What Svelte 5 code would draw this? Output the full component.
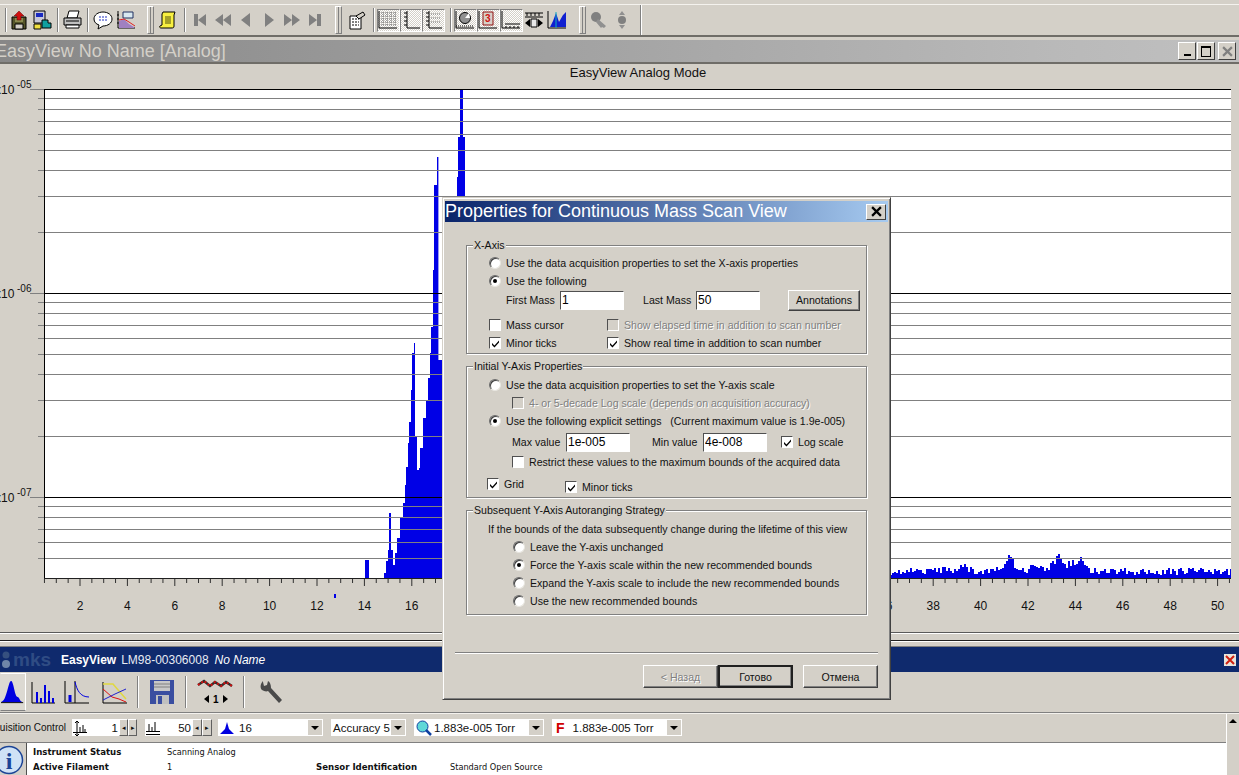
<script lang="ts">
  // chart geometry, same numbers as the page so the svg viewBox lines up with it
  const massX = (m: number) => 32.6 + 23.7 * m;
  const decades = [89, 293, 497];
  const minorOffsets = [9, 20, 32, 45, 61, 81, 107, 143];
  const gridLines = decades.flatMap((d) => minorOffsets.map((o) => d + o)).filter((y) => y < 578);

  const ticks: { x: number; major: boolean }[] = [];
  for (let m = 0.5; m <= 50.5; m += 0.5) {
    ticks.push({ x: massX(m), major: m % 2 === 0 });
  }
  // 18 to 34 sit behind the dialog
  const labels: number[] = [];
  for (let m = 2; m <= 50; m += 2) {
    if (m < 18 || m > 34) labels.push(m);
  }

  // left part of the spectrum, read off the picture: [x, top]
  const peaks: [number, number][] = [
    [365, 560], [369, 578], [384, 573], [386, 561], [388, 550], [389, 513], [391, 550], [393, 565],
    [395, 553], [397, 538], [400, 517], [403, 503], [405, 485], [406, 467], [408, 443], [409, 422],
    [411, 390], [412, 353], [414, 343], [415, 437], [417, 470], [419, 468], [420, 448], [423, 418],
    [426, 400], [428, 378], [430, 353], [431, 327], [433, 270], [434, 185], [437, 157], [438.4, 360],
    [442, 578], [457, 177], [458, 137], [460, 90], [463, 137], [465, 578]
  ];

  function stepPath(points: [number, number][], end: number) {
    let d = `M${points[0][0]} 578`;
    points.forEach(([x, y], i) => {
      const next = i + 1 < points.length ? points[i + 1][0] : end;
      d += `L${x} ${y}L${next} ${y}`;
    });
    return d + `L${end} 578Z`;
  }

  // noise tail on the right, with the few bumps the scan shows
  const bumps = [
    [1010, 3, 13], [1004, 7, 4], [1057, 2, 14], [1053, 7, 6], [1081, 3, 8], [1073, 8, 8],
    [962, 6, 5], [1033, 6, 4], [942, 8, 2]
  ];
  const tail: [number, number][] = [];
  let seed = 7;
  for (let x = 890; x < 1231; x += 2) {
    seed = (seed * 137 + 59) % 1009;
    let h = 3 + (seed / 1009) * 7;
    for (const [c, w, a] of bumps) h += a * Math.exp(-((x - c) * (x - c)) / (2 * w * w));
    tail.push([x, Math.round(578 - h)]);
  }

  const spectrum = stepPath(peaks, 465);
  const noise = stepPath(tail, 1231);

  const navIcons = [
    'M4 4h4v12H4zM8 10l8-6v12z',
    'M2 10l8-6v12zM10 10l8-6v12z',
    'M5 10l9-7v14z',
    'M6 3l9 7-9 7z',
    'M2 4l8 6-8 6zM10 4l8 6-8 6z',
    'M4 4l8 6-8 6zM12 4h4v12h-4z'
  ];
</script>

{#snippet radio(on: boolean, label: string)}
  <div class="row">
    <span class="radio">{#if on}<i></i>{/if}</span>
    <span>{label}</span>
  </div>
{/snippet}

{#snippet check(on: boolean, label: string, off: boolean = false)}
  <div class="row" class:off>
    <span class="box">
      {#if on}<svg viewBox="0 0 9 9" width="9" height="9"><path d="M1 4l2.5 2.5L8 1.5v2L3.5 8.5 1 6z" fill="#000" /></svg>{/if}
    </span>
    <span>{label}</span>
  </div>
{/snippet}

<div class="page">
  <div class="toolbar">
    <span class="sep s1"></span>
    <span class="tb">
      <svg viewBox="0 0 20 20"><path d="M3 7h14v12H3z" fill="#55552a" stroke="#000" /><path d="M6 14h8v5H6z" fill="#d4d0c8" stroke="#000" /><path d="M6 8h8v4H6z" fill="#8a8a50" /><path d="M10 1l5 5h-3v4H8V6H5z" fill="#d01010" stroke="#600" stroke-width=".5" /></svg>
    </span>
    <span class="tb">
      <svg viewBox="0 0 20 20"><path d="M2 1h11v12H2z" fill="#c8c8d8" stroke="#000" /><path d="M4 3h7v4H4z" fill="#1828c0" /><path d="M2 14h7v5H2z" fill="#f0e040" stroke="#000" /><path d="M10 10h6v3h3v5h-9z" fill="#10a0a0" stroke="#000" /></svg>
    </span>
    <span class="sep s2"></span>
    <span class="tb">
      <svg viewBox="0 0 20 20"><path d="M6 1h10l-2 7H4z" fill="#fff" stroke="#000" /><path d="M1 8h17v7H1z" fill="#c0c0c0" stroke="#000" /><path d="M3 15h13v3H3z" fill="#fff" stroke="#000" /><path d="M3 11h13" stroke="#000" /></svg>
    </span>
    <span class="sep s3"></span>
    <span class="tb">
      <svg viewBox="0 0 20 20"><path d="M10 2c5 0 9 3 9 7s-4 7-9 7l-5 3 1-4c-3-1-5-3-5-6 0-4 4-7 9-7z" fill="#fff" stroke="#000" /><path d="M6 7h8M6 10h8" stroke="#2030c0" stroke-dasharray="2 1" /></svg>
    </span>
    <span class="tb">
      <svg viewBox="0 0 20 20"><path d="M2 1v17h17" fill="none" stroke="#000" /><path d="M1 5h2M1 9h2M1 13h2" stroke="#000" /><path d="M7 2h10v6H7z" fill="#d8e8f0" stroke="#203060" /><path d="M3 11l5-2 5 5 5 3v1H3z" fill="#a080c0" /><path d="M3 10l5-1 5 3 6 4" fill="none" stroke="#e02020" /></svg>
    </span>
    <span class="grip"></span>
    <span class="tb">
      <svg viewBox="0 0 20 20"><path d="M5 2h12l-1 3v11c0 2-1 2-3 2H3c-1 0-2-1-1-2l2-1V4z" fill="#f8f040" stroke="#000" /><path d="M7 7h6M7 9h6M7 11h6M7 13h6" stroke="#505010" /></svg>
    </span>
    <span class="sep"></span>
    {#each navIcons as d}
      <span class="tb"><svg viewBox="0 0 20 20"><path {d} fill="#808080" /></svg></span>
    {/each}
    <span class="grip nav-end"></span>
    <span class="tb first">
      <svg viewBox="0 0 20 20"><path d="M3 6h11v13H3z" fill="#fff" stroke="#000" /><path d="M5 9h7M5 12h7M5 15h7" stroke="#000" stroke-dasharray="2 1" /><path d="M9 6l7-4 2 3-6 4z" fill="#d4d0c8" stroke="#000" /></svg>
    </span>
    <span class="sep"></span>
    <span class="tb on narrow">
      <svg viewBox="0 0 20 20"><path d="M1 1v17h18" fill="none" stroke="#000" /><path d="M3 3h15M3 6h15M3 9h15M3 12h15M3 15h15M5 2v14M9 2v14M13 2v14M17 2v14" stroke="#707070" stroke-dasharray="1 1" /></svg>
    </span>
    <span class="tb on narrow">
      <svg viewBox="0 0 20 20"><path d="M6 1v17h13" fill="none" stroke="#000" /><path d="M3 3h3M3 7h3M3 11h3M3 15h3" stroke="#000" /></svg>
    </span>
    <span class="tb on narrow">
      <svg viewBox="0 0 20 20"><path d="M6 1v17h13" fill="none" stroke="#000" /><path d="M3 3h3M3 7h3M3 11h3M3 15h3" stroke="#000" /><path d="M8 4h10M8 8h10M8 12h10" stroke="#707070" stroke-dasharray="1 1" /></svg>
    </span>
    <span class="sep"></span>
    <span class="tb on">
      <svg viewBox="0 0 20 20"><path d="M1 1v17h18" fill="none" stroke="#000" /><path d="M1 16h18" stroke="#000" stroke-dasharray="1 1" /><circle cx="10" cy="8" r="5.5" fill="#909090" stroke="#000" /><path d="M10 8l4-5 1 5z" fill="#fff" /></svg>
    </span>
    <span class="tb on">
      <svg viewBox="0 0 20 20"><path d="M1 1v17h18" fill="none" stroke="#000" /><path d="M5 2h10v13H5z" fill="#d8d0c8" stroke="#901010" /><text x="7" y="12" class="glyph">3</text></svg>
    </span>
    <span class="tb on">
      <svg viewBox="0 0 20 20"><path d="M1 1v17h18" fill="none" stroke="#000" /><path d="M4 14h15M5 16v2M9 16v2M13 16v2M17 16v2" stroke="#000" /></svg>
    </span>
    <span class="tb">
      <svg viewBox="0 0 20 20"><path d="M1 3h18M1 7h18" stroke="#000" fill="none" /><path d="M3 3v3M7 3v3M11 3v3M15 3v3" stroke="#000" /><path d="M1 13l5-4v8zM19 13l-5-4v8z" fill="#000" /><path d="M7 9h6v8H7z" fill="#e8e8e8" stroke="#000" /></svg>
    </span>
    <span class="tb">
      <svg viewBox="0 0 20 20"><path d="M1 1v17h18" fill="none" stroke="#000" /><path d="M3 17l3-6 3-8 3 9 4-7 3-3v15z" fill="#1020d0" /><path d="M9 2v16" stroke="#10b0c0" /></svg>
    </span>
    <span class="grip icons-end"></span>
    <span class="tb">
      <svg viewBox="0 0 20 20"><circle cx="7" cy="7" r="5" fill="#808080" /><path d="M9 9l8 7-2 2-2-1-1 1-5-6z" fill="#909090" /></svg>
    </span>
    <span class="tb">
      <svg viewBox="0 0 20 20"><path d="M10 1l3 4H7zM10 19l3-4H7z" fill="#909090" /><circle cx="10" cy="10" r="4" fill="#808080" /></svg>
    </span>
    <span class="toolbar-end"></span>
  </div>

  <div class="win-title">
    <span>EasyView No Name [Analog]</span>
    <div class="win-buttons">
      <button class="wb" aria-label="minimize"><i class="min"></i></button>
      <button class="wb" aria-label="maximize"><i class="max"></i></button>
      <button class="wb close" aria-label="close">
        <svg viewBox="0 0 10 10" width="11" height="11"><path d="M1 1l8 8M9 1l-8 8" stroke="#808080" stroke-width="2" /></svg>
      </button>
    </div>
  </div>

  <svg class="chart" viewBox="0 64 1239 568" width="1239" height="568">
    <text x="638" y="76.5" text-anchor="middle" class="chart-title">EasyView Analog Mode</text>
    <rect x="44" y="89" width="1187" height="489" fill="#fff" />
    <path d={spectrum} fill="#0000e6" />
    <path d={noise} fill="#0000e6" />
    {#each gridLines as y}
      <line x1="38" x2="1231" y1={y + 0.5} y2={y + 0.5} stroke="#808080" />
    {/each}
    {#each decades as y}
      <line x1="30" x2="44" y1={y + 0.5} y2={y + 0.5} stroke="#808080" />
      <line x1="44" x2="1231" y1={y + 0.5} y2={y + 0.5} stroke="#000" />
    {/each}
    {#each decades as y, i}
      <text x="-5" y={y + 5} class="axis">x10</text>
      <text x="17" y={y - 1} class="exp">-0{5 + i}</text>
    {/each}
    <line x1="44.5" x2="44.5" y1="89" y2="579" stroke="#000" />
    <line x1="44" x2="1231" y1="578.5" y2="578.5" stroke="#202020" />
    {#each ticks as t}
      <line x1={t.x} x2={t.x} y1="579" y2={t.major ? 586 : 583} stroke="#303030" />
    {/each}
    {#each labels as m}
      <text x={massX(m)} y="610" text-anchor="middle" class="axis">{m}</text>
    {/each}
    <rect x="334" y="594" width="2" height="4" fill="#0000e6" />
  </svg>

  <div class="strips"></div>

  <div class="app-bar">
    <span class="logo">
      <svg viewBox="0 0 12 20" width="12" height="20"><circle cx="6" cy="5" r="3.5" fill="#35507f" /><circle cx="6" cy="14" r="4" fill="#6f86a8" /></svg>
      <span>mks</span>
    </span>
    <b>EasyView</b>
    <span class="serial">LM98-00306008</span>
    <em>No Name</em>
    <span class="app-close">
      <svg viewBox="0 0 12 12" width="12" height="12"><rect width="12" height="12" fill="#e8e4dc" /><path d="M2 2l8 8M10 2l-8 8" stroke="#d02010" stroke-width="2" /></svg>
    </span>
  </div>

  <div class="modes">
    <span class="ib w26 sel">
      <svg viewBox="0 0 26 26" width="26" height="26"><path d="M-2 24C3 24 4 20 6 14S9 1 11 1s3 9 5 15c1 3 2 2 3 3s2 5 5 5z" fill="#0000e0" /><path d="M0 24.500h24" stroke="#000" /></svg>
    </span>
    <span class="ib w34">
      <svg viewBox="0 0 26 26" width="26" height="26"><path d="M2 3v21h23" fill="none" stroke="#000" /><path d="M7 13v11M11 19v5M15 6v18M19 12v6M19 18v6M23 19v5" stroke="#0000e0" stroke-width="2" /></svg>
    </span>
    <span class="ib w34">
      <svg viewBox="0 0 26 26" width="26" height="26"><path d="M1 2v22h24M11 2v22" fill="none" stroke="#000" /><path d="M6 16v7" stroke="#0000e0" stroke-width="3" /><path d="M11 3c2 8 5 15 14 15" fill="none" stroke="#0000e0" /></svg>
    </span>
    <span class="ib w42">
      <svg viewBox="0 0 26 26" width="26" height="26"><path d="M1 3v21h24" fill="none" stroke="#000" /><path d="M1 5h10l6 7 7 8" fill="none" stroke="#e0d840" stroke-width="1.500" /><path d="M1 10l9 8 7 2 7 3" fill="none" stroke="#e01010" /><path d="M1 21l12-6 11-5" fill="none" stroke="#2020d0" /></svg>
    </span>
    <span class="sep tall"></span>
    <span class="ib w44">
      <svg viewBox="0 0 26 26" width="26" height="26"><path d="M1 1h24v24H1z" fill="#3a4ea0" /><path d="M5 2h16v10H5z" fill="#c8c8c8" /><path d="M5 5h16M5 8h16" stroke="#808080" /><path d="M7 16h13v9H7z" fill="#c0c0c0" /><path d="M9 17h4v8H9z" fill="#3a4ea0" /></svg>
    </span>
    <span class="sep tall"></span>
    <span class="ib w54">
      <svg viewBox="0 0 36 28" width="36" height="28"><path d="M1 7l6-4 6 5 5-4 6 4 5-4 6 4" fill="none" stroke="#303030" stroke-width="2.500" /><path d="M1 7l6-4 6 5 5-4 6 4 5-4 6 4" fill="none" stroke="#d01010" stroke-dasharray="2 2" stroke-width="2" /><path d="M7 21l5-4v8zM31 21l-5-4v8z" fill="#000" /><text x="16" y="25" class="spin-num">1</text></svg>
    </span>
    <span class="sep tall"></span>
    <span class="ib w52">
      <svg viewBox="0 0 26 26" width="26" height="26"><path d="M4 2c-3 3-3 7-1 9 2 1 4 2 6 1l11 12 3-3L12 9c0-3-1-6-3-7l-1 4-3 1-1-4z" fill="#4a4a4a" /></svg>
    </span>
  </div>

  <div class="lower">
    <div class="lower-main">
      <div class="controls">
        <div class="ctl-label"><span>Acquisition Control</span></div>
        <div class="field range">
          <svg viewBox="0 0 16 16" width="16" height="16"><path d="M1 12.500h14M5 2v13M8 7v5M11 5v7M13 9v3" stroke="#000" fill="none" /><path d="M3 3l2-2 2 2M3 14l2 2 2-2" fill="none" stroke="#000" /></svg>
          <span class="val">1</span>
        </div>
        <span class="spin"><button aria-label="down">◂</button><button aria-label="up">▸</button></span>
        <div class="field range second">
          <svg viewBox="0 0 16 16" width="16" height="16"><path d="M1 14.500h14M4 4v7M7 7v4M10 2v9M1 11.500h14" stroke="#000" fill="none" /></svg>
          <span class="val">50</span>
        </div>
        <span class="spin wide"><button aria-label="down">◂</button><button aria-label="up">▸</button></span>
        <div class="field combo peak">
          <svg viewBox="0 0 14 14" width="14" height="14"><path d="M0 13L5 8l2-7 2 7 5 5z" fill="#0000e0" /></svg>
          <span>16</span>
          <span class="drop"></span>
        </div>
        <div class="field combo accuracy"><span>Accuracy 5</span><span class="drop"></span></div>
        <div class="field combo torr">
          <svg viewBox="0 0 16 16" width="16" height="16"><circle cx="6.500" cy="6.500" r="5.500" fill="#60d8d8" stroke="#1040a0" /><path d="M10 10l5 5" stroke="#1040a0" stroke-width="2.500" /></svg>
          <span>1.883e-005 Torr</span>
          <span class="drop"></span>
        </div>
        <div class="field combo torr filament">
          <b>F</b>
          <span>1.883e-005 Torr</span>
          <span class="drop"></span>
        </div>
      </div>
      <div class="info">
        <div class="info-icon">
          <svg viewBox="0 0 27 32" width="27" height="32"><circle cx="9" cy="17" r="13.500" fill="#cfe2f6" stroke="#1c4496" stroke-width="1.500" /><text x="9" y="26" text-anchor="middle" class="info-i">i</text></svg>
        </div>
        <div class="info-grid">
          <b>Instrument Status</b><span>Scanning Analog</span><b></b><span></span>
          <b>Active Filament</b><span>1</span><b>Sensor Identification</b><span>Standard Open Source</span>
        </div>
      </div>
    </div>
    <div class="scroll"><i></i></div>
  </div>

  <div class="dialog">
    <div class="dlg-title">
      <span>Properties for Continuous Mass Scan View</span>
      <button class="dlg-close" aria-label="close">
        <svg viewBox="0 0 10 10" width="11" height="11"><path d="M1 1l8 8M9 1l-8 8" stroke="#000" stroke-width="2" /></svg>
      </button>
    </div>

    <section class="group g1">
      <span class="legend">X-Axis</span>
      {@render radio(false, 'Use the data acquisition properties to set the X-axis properties')}
      {@render radio(true, 'Use the following')}
      <div class="row fields">
        <label class="w54" for="first">First Mass</label>
        <input id="first" value="1" />
        <label class="w53 gap19" for="last">Last Mass</label>
        <input id="last" value="50" />
        <button class="btn annotations">Annotations</button>
      </div>
      <div class="checks">
        {@render check(false, 'Mass cursor')}
        {@render check(false, 'Show elapsed time in addition to scan number', true)}
        {@render check(true, 'Minor ticks')}
        {@render check(true, 'Show real time in addition to scan number')}
      </div>
    </section>

    <section class="group g2">
      <span class="legend">Initial Y-Axis Properties</span>
      {@render radio(false, 'Use the data acquisition properties to set the Y-axis scale')}
      <div class="indent">{@render check(false, '4- or 5-decade Log scale (depends on acquisition accuracy)', true)}</div>
      {@render radio(true, 'Use the following explicit settings   (Current maximum value is 1.9e-005)')}
      <div class="row fields indent values">
        <label class="w54" for="max">Max value</label>
        <input id="max" value="1e-005" />
        <label class="w51 gap22" for="min">Min value</label>
        <input id="min" value="4e-008" />
        <div class="log">{@render check(true, 'Log scale')}</div>
      </div>
      <div class="indent restrict">{@render check(false, 'Restrict these values to the maximum bounds of the acquired data')}</div>
      <div class="grid-row">
        {@render check(true, 'Grid')}
        <div class="minor">{@render check(true, 'Minor ticks')}</div>
      </div>
    </section>

    <section class="group g3">
      <span class="legend">Subsequent Y-Axis Autoranging Strategy</span>
      <div class="row lead">If the bounds of the data subsequently change during the lifetime of this view</div>
      <div class="strategy">
        {@render radio(false, 'Leave the Y-axis unchanged')}
        {@render radio(true, 'Force the Y-axis scale within the new recommended bounds')}
        {@render radio(false, 'Expand the Y-axis scale to include the new recommended bounds')}
        {@render radio(false, 'Use the new recommended bounds')}
      </div>
    </section>

    <div class="dlg-sep"></div>
    <div class="dlg-buttons">
      <button class="btn wizard off">&lt; Назад</button>
      <button class="btn wizard default">Готово</button>
      <button class="btn wizard cancel">Отмена</button>
    </div>
  </div>
</div>

<style>
  :global(body) {
    background: #d4d0c8;
    overflow: hidden;
  }
  .page {
    position: relative;
    width: 1239px;
    height: 775px;
    overflow: hidden;
    background: #d4d0c8;
    font: 11px "Liberation Sans", Arial, sans-serif;
    color: #111;
    display: flex;
    flex-direction: column;
  }
  button {
    font: inherit;
    color: inherit;
    padding: 0;
  }

  /* top toolbar */
  .toolbar {
    height: 30px;
    margin-top: 4px;
    flex: none;
    display: flex;
    align-items: center;
    border-top: 1px solid #f4f2ee;
    border-bottom: 2px solid #6f6d68;
    box-sizing: content-box;
  }
  .tb {
    width: 23px;
    height: 23px;
    flex: none;
    display: flex;
    align-items: center;
    justify-content: center;
  }
  .tb svg {
    width: 20px;
    height: 20px;
  }
  .tb.on {
    box-sizing: border-box;
    background: repeating-conic-gradient(#fff 0 25%, #d4d0c8 0 50%) 0 0 / 2px 2px;
    border: 1px solid;
    border-color: #808080 #fff #fff #808080;
  }
  .tb.narrow {
    width: 22.5px;
  }
  .tb.first {
    margin-left: 1px;
  }
  .glyph {
    font: bold 10px "Liberation Sans", sans-serif;
    fill: #d01010;
  }
  .sep {
    width: 2px;
    height: 24px;
    flex: none;
    margin: 0 2px 0 5px;
    background: linear-gradient(90deg, #808080 50%, #fff 50%);
  }
  .sep.s1 {
    margin-right: 0;
  }
  .sep.s2 {
    margin-left: 4px;
  }
  .sep.s3 {
    margin-left: 3px;
  }
  .grip {
    width: 7px;
    height: 28px;
    flex: none;
    margin: 0 2px 0 10px;
    border: 1px solid;
    border-color: #fff #808080 #808080 #fff;
    box-sizing: border-box;
    background: linear-gradient(90deg, #d4d0c8 2px, #808080 2px, #808080 3px, #d4d0c8 3px);
  }
  .grip.nav-end {
    margin-left: 9px;
  }
  .toolbar-end {
    width: 2px;
    height: 30px;
    margin-left: 6px;
    background: linear-gradient(90deg, #808080 50%, #fff 50%);
  }

  /* analog window */
  .win-title {
    height: 22px;
    margin-top: 3px;
    flex: none;
    display: flex;
    align-items: center;
    justify-content: space-between;
    border-bottom: 2px solid #6f6d68;
    background: linear-gradient(90deg, #878787, #b9b9b9 85%, #c0c0c0);
    color: #d4d0c8;
    font-size: 18px;
    overflow: hidden;
  }
  .win-title > span {
    margin: 1px 0 0 -5px;
    white-space: nowrap;
  }
  .win-buttons {
    display: flex;
    gap: 1px;
    margin-right: 3px;
  }
  .wb {
    width: 18px;
    height: 18px;
    box-sizing: border-box;
    background: #d4d0c8;
    border: 1px solid;
    border-color: #fff #404040 #404040 #fff;
    display: flex;
    align-items: center;
    justify-content: center;
    position: relative;
  }
  .wb.close {
    margin-left: 2px;
  }
  .min {
    width: 7px;
    height: 2px;
    background: #000;
    margin-top: 8px;
  }
  .max {
    width: 8px;
    height: 8px;
    border: 1px solid #000;
    border-top-width: 2px;
  }
  .chart {
    display: block;
    flex: none;
  }
  .chart-title {
    font: 13px "Liberation Sans", sans-serif;
    fill: #111;
  }
  .axis {
    font: 12px "Liberation Sans", sans-serif;
    fill: #111;
  }
  .exp {
    font: 10px "Liberation Sans", sans-serif;
    fill: #111;
  }
  .strips {
    height: 15px;
    flex: none;
    box-sizing: border-box;
    border-top: 1px solid #5a5a5a;
    border-bottom: 1px solid #808080;
    background: linear-gradient(#fff 1px, #d4d0c8 1px, #d4d0c8 7px, #202020 7px, #202020 8px, #fff 8px, #fff 9px, #d4d0c8 9px);
  }

  /* instrument bar */
  .app-bar {
    height: 25px;
    flex: none;
    display: flex;
    align-items: center;
    background: #0f2a6d;
    color: #fff;
    font-size: 12px;
    position: relative;
  }
  .logo {
    width: 61px;
    flex: none;
    display: flex;
    align-items: center;
    gap: 1px;
    color: #2f4c84;
    font-size: 19px;
    font-weight: bold;
  }
  .serial {
    margin-left: 5px;
    color: #e8ecf4;
  }
  .app-bar em {
    margin-left: 6px;
  }
  .app-close {
    margin-left: auto;
    margin-right: 3px;
    display: flex;
  }
  .modes {
    height: 40px;
    flex: none;
    display: flex;
    align-items: center;
    border-bottom: 1px solid #808080;
  }
  .ib {
    height: 38px;
    flex: none;
    display: flex;
    align-items: center;
    justify-content: center;
    box-sizing: border-box;
  }
  .ib.sel {
    border: 1px solid;
    border-color: #fff #fff #808080 transparent;
    background: #dcd9d2;
  }
  .w26 { width: 26px; }
  .w34 { width: 34px; }
  .w42 { width: 42px; }
  .w44 { width: 44px; }
  .w52 { width: 52px; }
  .w54 { width: 54px; }
  .sep.tall {
    height: 32px;
    margin: 0 1px;
  }
  .spin-num {
    font: bold 10px "Liberation Sans", sans-serif;
    fill: #000;
  }

  /* lower part */
  .lower {
    flex: 1;
    display: flex;
    min-height: 0;
    border-top: 1px solid #f4f2ee;
  }
  .lower-main {
    flex: 1;
    min-width: 0;
    display: flex;
    flex-direction: column;
  }
  .controls {
    height: 29px;
    flex: none;
    display: flex;
    align-items: center;
    padding-bottom: 1px;
    border-bottom: 1px solid #808080;
    box-sizing: border-box;
    font-size: 11px;
  }
  .ctl-label {
    width: 66px;
    flex: none;
    display: flex;
    justify-content: flex-end;
    overflow: hidden;
    white-space: nowrap;
    font-size: 10px;
  }
  .field {
    height: 17px;
    flex: none;
    background: #fff;
    display: flex;
    align-items: center;
    box-sizing: border-box;
    font-size: 11.500px;
  }
  .range {
    width: 47px;
    margin-left: 6px;
    padding-right: 1px;
  }
  .range.second {
    margin-left: 8px;
  }
  .val {
    margin-left: auto;
  }
  .spin {
    display: flex;
  }
  .spin button {
    width: 9px;
    height: 17px;
    font-size: 7px;
    line-height: 1;
    background: #d4d0c8;
    border: 1px solid;
    border-color: #fff #606060 #606060 #fff;
  }
  .spin.wide button {
    width: 10px;
  }
  .combo {
    gap: 5px;
    padding-left: 2px;
    position: relative;
  }
  .drop {
    position: absolute;
    right: 1px;
    top: 1px;
    bottom: 1px;
    width: 14px;
    background: #d4d0c8;
  }
  .drop::after {
    content: "";
    position: absolute;
    left: 3px;
    top: 6px;
    border: 4px solid transparent;
    border-top: 4px solid #000;
    border-bottom: 0;
  }
  .peak {
    width: 105px;
    margin-left: 6px;
  }
  .accuracy {
    width: 75px;
    margin-left: 8px;
  }
  .torr {
    width: 130px;
    margin-left: 8px;
    gap: 2px;
  }
  .filament {
    gap: 8px;
    padding-left: 4px;
  }
  .filament b {
    color: #d00000;
    font-size: 14px;
  }
  .info {
    flex: 1;
    display: flex;
    background: #fff;
    min-height: 0;
    overflow: hidden;
  }
  .info-icon {
    width: 27px;
    flex: none;
    box-sizing: border-box;
    background: #d4d0c8;
    border-right: 1px solid #505050;
    overflow: hidden;
  }
  .info-i {
    font: bold 24px "Liberation Serif", serif;
    fill: #1c4496;
  }
  .info-grid {
    display: grid;
    grid-template-columns: 134px 149px 134px auto;
    grid-auto-rows: 15px;
    padding: 1px 0 0 6px;
    font: 8.200px "DejaVu Sans", sans-serif;
    align-items: center;
  }
  .info-grid b {
    font-size: 8.600px;
    font-weight: bold;
  }
  .scroll {
    width: 12px;
    flex: none;
    border-left: 1px solid #fff;
    position: relative;
  }
  .scroll i {
    position: absolute;
    left: 2px;
    top: 5px;
    border: 4px solid transparent;
    border-bottom: 4px solid #000;
    border-top: 0;
  }

  /* properties dialog, floats over the window */
  .dialog {
    position: absolute;
    left: 442px;
    top: 197px;
    width: 449px;
    height: 503px;
    box-sizing: border-box;
    background: #d4d0c8;
    border: 1px solid;
    border-color: #d4d0c8 #404040 #404040 #d4d0c8;
    box-shadow: inset 1px 1px 0 #fff, inset -1px -1px 0 #808080;
    padding: 3px 2px 0;
    font-size: 10.600px;
  }
  .dlg-title {
    height: 21px;
    display: flex;
    align-items: center;
    justify-content: space-between;
    background: linear-gradient(90deg, #0a246a, #a6caf0);
    color: #fff;
    font-size: 18px;
    white-space: nowrap;
  }
  .dlg-close {
    width: 20px;
    height: 16px;
    margin-right: 2px;
    box-sizing: border-box;
    background: #d4d0c8;
    border: 1px solid;
    border-color: #fff #404040 #404040 #fff;
    display: flex;
    align-items: center;
    justify-content: center;
  }
  .group {
    position: relative;
    box-sizing: border-box;
    width: 401px;
    margin: 12px 0 0 21px;
    padding: 9px 0 0 22px;
    border: 1px solid #808080;
    box-shadow: 1px 1px 0 #fff, inset 1px 1px 0 #fff;
  }
  .g1 {
    height: 109px;
    margin-top: 23px;
    padding-top: 8px;
  }
  .g2 {
    height: 132px;
  }
  .g3 {
    height: 105px;
  }
  .legend {
    position: absolute;
    top: -7px;
    left: 6px;
    padding: 0 1px;
    background: #d4d0c8;
    white-space: nowrap;
  }
  .row {
    height: 18px;
    display: flex;
    align-items: center;
    gap: 5px;
    white-space: pre;
  }
  .row.off {
    color: #808080;
    text-shadow: 1px 1px 0 #fff;
  }
  .radio {
    width: 12px;
    height: 12px;
    flex: none;
    box-sizing: border-box;
    border-radius: 50%;
    background: #fff;
    border: 1px solid;
    border-color: #6a6a6a #e8e6e0 #e8e6e0 #6a6a6a;
    box-shadow: inset 1px 1px 0 #404040;
    display: flex;
    align-items: center;
    justify-content: center;
  }
  .radio i {
    width: 4px;
    height: 4px;
    border-radius: 50%;
    background: #000;
  }
  .box {
    width: 12px;
    height: 12px;
    flex: none;
    box-sizing: border-box;
    background: #fff;
    border: 1px solid;
    border-color: #505050 #fff #fff #505050;
    display: flex;
    align-items: center;
    justify-content: center;
  }
  .off .box {
    background: #d4d0c8;
  }
  .fields {
    gap: 0;
    height: 20px;
    margin-left: 17px;
  }
  .fields label {
    flex: none;
  }
  .fields .w54 { width: 54px; }
  .w53 { width: 53px; }
  .w51 { width: 51px; }
  .gap19 { margin-left: 19px; }
  .gap22 { margin-left: 22px; }
  input {
    width: 64px;
    height: 19px;
    flex: none;
    box-sizing: border-box;
    padding: 0 1px;
    border: 1px solid;
    border-color: #505050 #fff #fff #505050;
    background: #fff;
    font: 12px "Liberation Sans", sans-serif;
    color: #000;
    outline: none;
  }
  .btn {
    background: #d4d0c8;
    border: 1px solid;
    border-color: #fff #404040 #404040 #fff;
    box-shadow: inset -1px -1px 0 #808080;
    box-sizing: border-box;
  }
  .annotations {
    width: 72px;
    height: 21px;
    margin-left: 28px;
    flex: none;
  }
  .checks {
    display: grid;
    grid-template-columns: 118px auto;
    margin-top: 6px;
  }
  .indent {
    margin-left: 23px;
  }
  .values {
    margin-left: 23px;
    margin-top: 2px;
  }
  .log {
    margin-left: 14px;
  }
  .restrict {
    margin-top: 1px;
  }
  .grid-row {
    display: flex;
    margin: 4px 0 0 -2px;
  }
  .minor {
    margin: 3px 0 0 41px;
  }
  .lead {
    margin-left: -1px;
  }
  .strategy {
    margin-left: 24px;
  }
  .dlg-sep {
    height: 0;
    margin: 37px 10px 0 10px;
    border-top: 1px solid #808080;
    border-bottom: 1px solid #fff;
  }
  .dlg-buttons {
    display: flex;
    justify-content: flex-end;
    margin: 11px 10px 0 0;
  }
  .wizard {
    width: 75px;
    height: 23px;
  }
  .wizard.off {
    color: #808080;
    text-shadow: 1px 1px 0 #fff;
  }
  .wizard.default {
    border: 2px solid #000;
    border-color: #202020;
  }
  .wizard.cancel {
    margin-left: 10px;
  }
</style>
